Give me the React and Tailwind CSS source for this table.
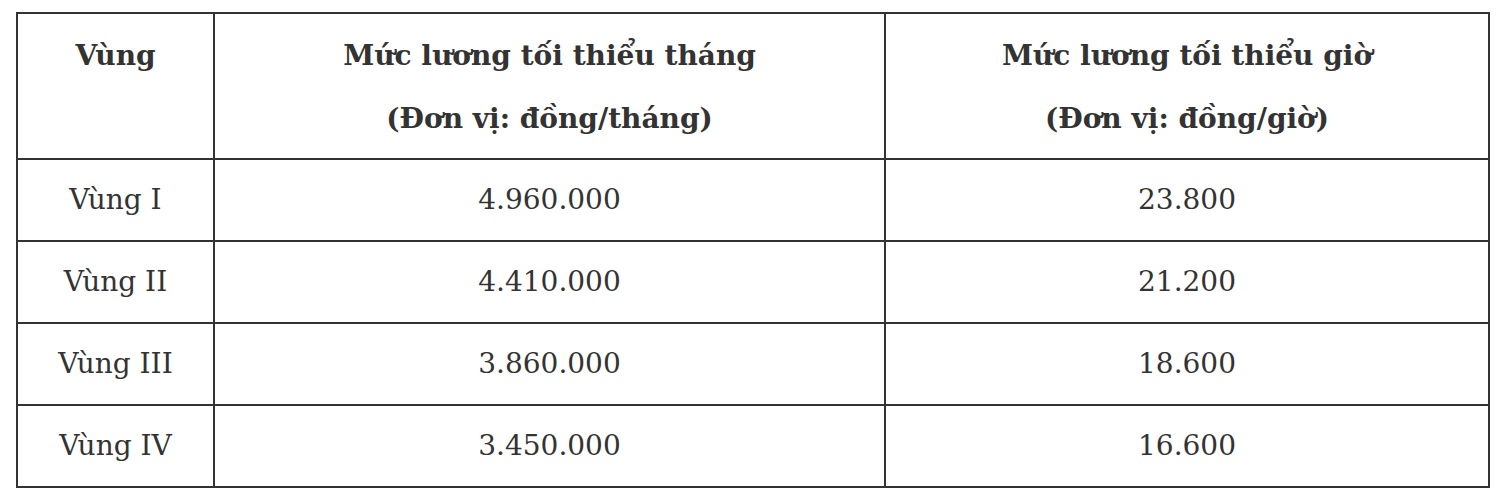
import React from 'react';

const rows = [
  ['Vùng I', '4.960.000', '23.800'],
  ['Vùng II', '4.410.000', '21.200'],
  ['Vùng III', '3.860.000', '18.600'],
  ['Vùng IV', '3.450.000', '16.600'],
];

const App = () => {
  return (
    <div className="min-h-screen bg-white pt-[12px] pl-[16px] font-['DejaVu_Serif',serif] text-[#333]">
      <table className="w-[1474px] table-fixed border-collapse text-[28px]">
        <thead>
          <tr className="h-[146px]">
            <th className="w-[197px] border-2 border-[#333] align-top pt-[10px] leading-[63px] font-bold">
              Vùng
            </th>
            <th className="w-[671px] border-2 border-[#333] align-top pt-[10px] leading-[63px] font-bold">
              <div>Mức lương tối thiểu tháng</div>
              <div>(Đơn vị: đồng/tháng)</div>
            </th>
            <th className="w-[604px] border-2 border-[#333] align-top pt-[10px] leading-[63px] font-bold">
              <div>Mức lương tối thiểu giờ</div>
              <div>(Đơn vị: đồng/giờ)</div>
            </th>
          </tr>
        </thead>
        <tbody>
          {rows.map((row) => (
            <tr key={row[0]} className="h-[82px]">
              {row.map((cell, i) => (
                <td key={i} className="border-2 border-[#333] text-center align-middle leading-none">
                  {cell}
                </td>
              ))}
            </tr>
          ))}
        </tbody>
      </table>
    </div>
  );
};

export default App;
